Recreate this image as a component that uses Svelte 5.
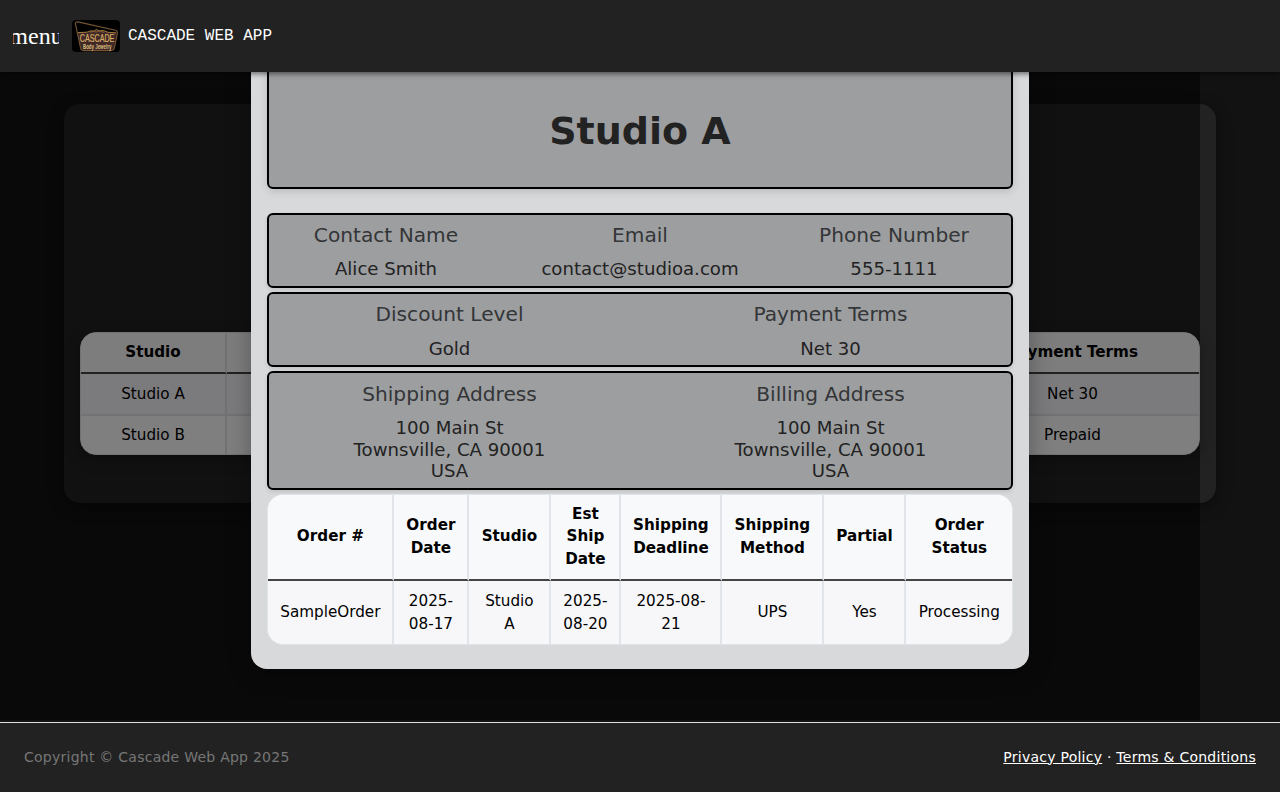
<script>
  const orderColumns = [
    { label: 'Order #', value: 'SampleOrder', width: 126 },
    { label: 'Order Date', value: '2025-08-17', width: 75 },
    { label: 'Studio', value: 'Studio A', width: 82 },
    { label: 'Est Ship Date', value: '2025-08-20', width: 70 },
    { label: 'Shipping Deadline', value: '2025-08-21', width: 101 },
    { label: 'Shipping Method', value: 'UPS', width: 102 },
    { label: 'Partial', value: 'Yes', width: 82 },
    { label: 'Order Status', value: 'Processing', width: 108 }
  ];
  const sections = [
    [['Contact Name', 'Alice Smith'], ['Email', 'contact@studioa.com'], ['Phone Number', '555-1111']],
    [['Discount Level', 'Gold'], ['Payment Terms', 'Net 30']],
    [
      ['Shipping Address', '100 Main St\nTownsville, CA 90001\nUSA'],
      ['Billing Address', '100 Main St\nTownsville, CA 90001\nUSA']
    ]
  ];
  const studios = [['Studio A', 'Net 30'], ['Studio B', 'Prepaid']];
</script>

<div class="app">
  <header>
    <button class="menu"><span>menu</span></button>
    <svg class="logo" width="48" height="32" viewBox="0 0 48 32">
      <rect width="48" height="32" rx="4" fill="#000" />
      <path d="M5.4 12.8L15 12.6L19 11.2L22 11.5L24.5 9.8L27 11.4L31 10.9L36 12.6L45 12.8L41.8 28.3Q41.2 29.9 39 29.9H12Q9.5 29.9 9 28Z" fill="#3f2827" />
      <path d="M3.3 3.4Q3.8 1.4 7 2.1L43.5 10.2Q46 11 45.3 14L42.3 28.2Q41.6 30.6 39 30.6H12Q9.2 30.6 8.6 28.2Z" fill="none" stroke="#765534" stroke-width="1.1" />
      <path d="M6 12.6L15 12.2L19 10.8L22 11.2L24.5 9.4L27 11L31 10.5L36 12.3L44 12.8" fill="none" stroke="#b88947" stroke-width=".9" />
      <path d="M18 12.3L21 11.4L24 12L27 11L32 12.3" fill="none" stroke="#9b6d38" stroke-width=".7" />
      <text transform="translate(7.8 22.2) scale(.65 1)" font-family="Liberation Sans" font-size="11" fill="#d6ad62" stroke="#d6ad62" stroke-width=".25">CASCADE</text>
      <text transform="translate(11 28.9) scale(.648 1)" font-family="Liberation Sans" font-weight="bold" font-size="6.8" fill="#dfc07e">Body Jewelry</text>
    </svg>
    <span class="brand">CASCADE WEB APP</span>
  </header>

  <main>
    <section class="card">
      <div class="table-frame">
        <table class="studios">
          <colgroup><col class="first" /><col /><col class="last" /></colgroup>
          <thead><tr><th>Studio</th><th></th><th>Payment Terms</th></tr></thead>
          <tbody>
            {#each studios as [name, terms]}
              <tr><td>{name}</td><td></td><td>{terms}</td></tr>
            {/each}
          </tbody>
        </table>
      </div>
    </section>

    <div class="overlay"></div>

    <div class="modal">
      <div class="box title"><h1>Studio A</h1></div>
      {#each sections as section}
        <div class="box fields">
          {#each section as [label, value]}
            <div class="field">
              <div class="label">{label}</div>
              <div class="value">{value}</div>
            </div>
          {/each}
        </div>
      {/each}
      <div class="table-frame orders-frame">
        <table class="orders">
          <colgroup>
            {#each orderColumns as c}<col style="width: {c.width}px" />{/each}
          </colgroup>
          <thead><tr>{#each orderColumns as c}<th>{c.label}</th>{/each}</tr></thead>
          <tbody><tr>{#each orderColumns as c}<td>{c.value}</td>{/each}</tr></tbody>
        </table>
      </div>
    </div>
  </main>

  <footer>
    <span class="copy">Copyright © Cascade Web App 2025</span>
    <span class="links"><a href="#privacy">Privacy Policy</a> · <a href="#terms">Terms &amp; Conditions</a></span>
  </footer>
</div>

<style>
  :global(body) { margin: 0; background: #121212; }
  .app {
    display: flex;
    flex-direction: column;
    width: 1280px;
    height: 792px;
    overflow: hidden;
    font-family: "DejaVu Sans", sans-serif;
    background: #121212;
  }
  header {
    position: relative;
    z-index: 5;
    flex: none;
    box-sizing: border-box;
    display: flex;
    align-items: center;
    height: 72px;
    padding-left: 13px;
    background: #222;
    box-shadow: 0 2px 5px rgba(0, 0, 0, 0.5);
  }
  .menu {
    display: flex;
    justify-content: center;
    align-items: center;
    width: 46px;
    height: 48px;
    margin: 0 13px 0 0;
    padding: 0;
    border: 0;
    overflow: hidden;
    background: none;
    color: #fff;
    font: 24px/24px "Liberation Serif", serif;
  }
  .menu span { flex: none; }
  .logo { flex: none; margin-right: 8px; }
  .brand { color: #fff; font: 16px/24px "Liberation Mono", monospace; }
  main { position: relative; flex: 1; overflow: hidden; }
  .card {
    box-sizing: border-box;
    width: 1152px;
    height: 399px;
    margin: 32px 64px;
    padding: 228px 16px 0;
    border-radius: 16px;
    background: #222;
    box-shadow: 0 4px 16px rgba(0, 0, 0, 0.4);
  }
  .table-frame {
    box-sizing: border-box;
    overflow: hidden;
    border: 1px solid #e1e4e8;
    border-radius: 16px;
    background: #fff;
  }
  .card .table-frame { height: 123px; box-shadow: 0 4px 16px rgba(0, 0, 0, 0.3); }
  table { width: 100%; table-layout: fixed; border-spacing: 0; text-align: center; font-size: 15.2px; line-height: 22.8px; color: #000; }
  th, td { box-sizing: border-box; border-right: 2px solid #e1e4e8; padding: 0; }
  th:last-child, td:last-child { border-right: 0; }
  th { background: #f8f9fb; border-bottom: 2px solid #444; }
  td { background: #f7f7f9; }
  .studios .first { width: 146px; }
  .studios .last { width: 253px; }
  .studios th { height: 41px; background: #fbfbfb; }
  .studios td { height: 42px; border-bottom: 2px solid #e1e4e8; background: #f7f7fb; }
  .studios tr:last-child td { height: 38px; border-bottom: 0; background: #fff; }
  .overlay { position: absolute; top: 0; left: 0; width: 1200px; height: 648px; background: rgba(0, 0, 0, 0.5); }
  .modal {
    position: absolute;
    top: -26px;
    left: 251px;
    box-sizing: border-box;
    width: 778px;
    height: 623px;
    padding: 16px 16px 0;
    border-radius: 16px;
    background: #d8d9db;
    box-shadow: 0 4px 24px rgba(0, 0, 0, 0.3);
  }
  .box {
    box-sizing: border-box;
    border: 2px solid #000;
    border-radius: 6px;
    background: #9d9ea0;
    box-shadow: 0 2px 4px rgba(0, 0, 0, 0.1);
  }
  .title { height: 127px; margin-bottom: 24px; padding-top: 44px; box-shadow: 0 2px 8px rgba(0, 0, 0, 0.15); }
  h1 { margin: 0; color: #222; font-size: 38px; line-height: 47px; text-align: center; }
  .fields { display: flex; gap: 20px; padding: 5.27px 0 4.73px; margin-bottom: 4px; }
  .field { flex: 1 1 0; text-align: center; }
  .label { margin-bottom: 8.2px; color: #333537; font-size: 20.16px; line-height: 30px; }
  .value { color: #222; font-size: 18.144px; line-height: 21.74px; white-space: pre-line; padding-bottom: 1.26px; }
  .orders-frame { height: 151px; margin-top: 4.25px; }
  .orders th { height: 86px; padding: 0 10.2px 0.8px 11px; }
  .orders td { height: 63px; padding: 0 10.2px 0 11px; }
  .orders th:last-child, .orders td:last-child { padding-right: 12.5px; }
  footer {
    flex: none;
    position: relative;
    box-sizing: border-box;
    display: flex;
    align-items: center;
    justify-content: space-between;
    height: 70px;
    padding: 0 24px 2px;
    border-top: 1px solid #e0e0e0;
    background: #222;
    font-size: 14px;
    letter-spacing: 0.25px;
  }
  .copy { color: #777; }
  .links, a { color: #fff; }
</style>
